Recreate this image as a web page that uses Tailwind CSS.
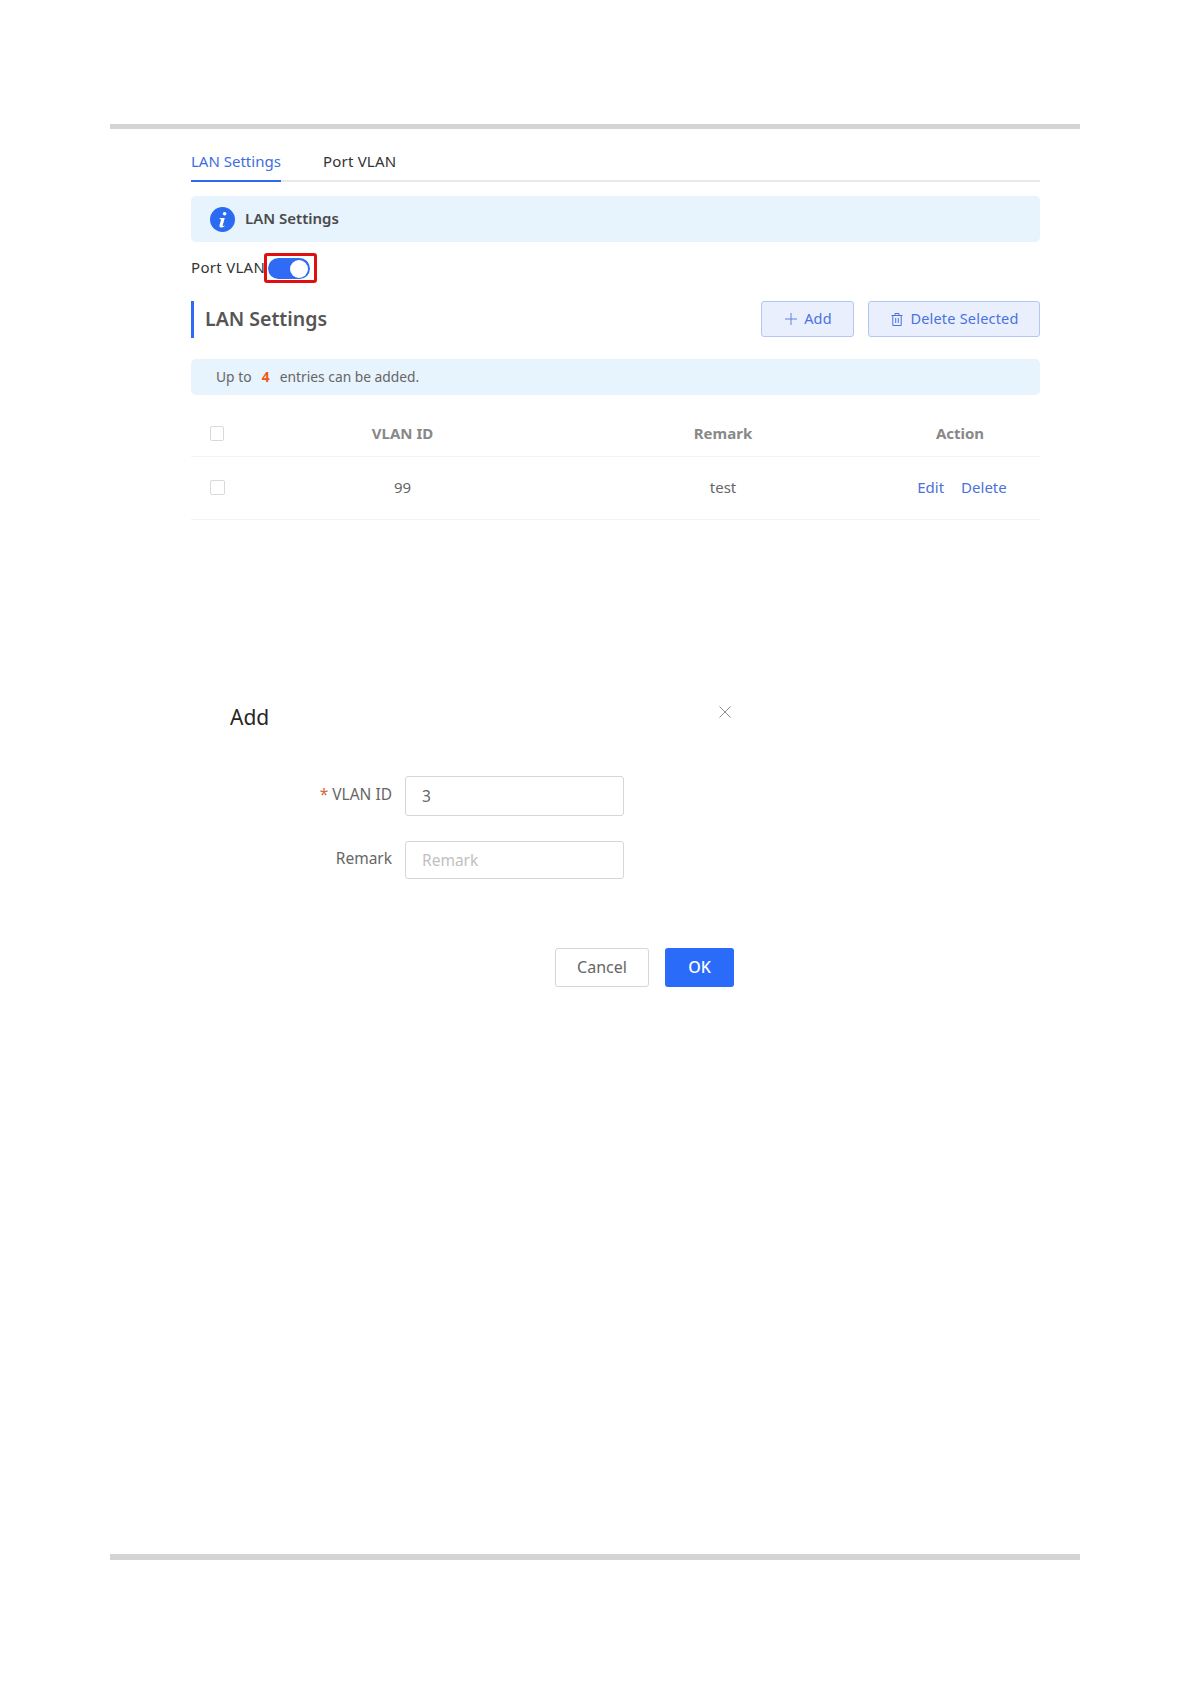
<!DOCTYPE html>
<html lang="en">
<head>
  <meta charset="UTF-8">
  <title>LAN Settings</title>
  <script src="https://cdn.jsdelivr.net/npm/@tailwindcss/browser@4"></script>
</head>
<body class="bg-white font-['Noto_Sans',sans-serif]">
  <div class="h-[1684px] w-[1191px] pt-[124px] pl-[110px] flex flex-col">
    <!-- Page rule -->
    <div class="h-[5px] w-[970px] bg-[#d4d4d4]"></div>

    <div class="w-[849px] ml-[81px]">
      <!-- Tabs -->
      <div class="mt-[21px] h-[32px] flex gap-[42px] border-b-2 border-[#e8e8e8] text-[15px] leading-[22px]">
        <div class="h-[32px] w-[90px] border-b-2 border-[#2f6bf0] text-[#3d6ee0] whitespace-nowrap">LAN Settings</div>
        <div class="text-[#333] whitespace-nowrap tracking-[0.2px]">Port VLAN</div>
      </div>

      <!-- Info banner -->
      <div class="mt-[14px] h-[46px] rounded-[5px] bg-[#e7f3fd] flex items-center pl-[19px] gap-[10px]">
        <svg width="25" height="25" viewBox="0 0 25 25" class="shrink-0">
          <circle cx="12.5" cy="12.5" r="12.5" fill="#2b6bf3"/>
          <circle cx="14.6" cy="6.8" r="1.8" fill="#fff"/>
          <path d="M9.8 11h5l-2.1 7.3q-.2.9.7.7l1.3-.6-.2.9q-2 1.400-3.800 1.200-1.700-.3-1.300-2l1.700-6.100-1.500-.3z" fill="#fff"/>
        </svg>
        <span class="text-[15px] font-semibold text-[#4a4a4a] pb-[2px]">LAN Settings</span>
      </div>

      <!-- Port VLAN switch -->
      <div class="mt-[11px] h-[30px] flex items-center text-[15px] tracking-[0.3px] text-[#333]">
        <span class="w-[73px] whitespace-nowrap pb-[2px]">Port VLAN</span>
        <div class="w-[53px] h-[30px] border-[3px] border-[#e01010] rounded-[3px] flex items-center pl-[1px] pt-[1px]">
          <div class="w-[42px] h-[21px] rounded-full bg-[#2f6bf5] flex items-center justify-end pr-[2px]">
            <div class="w-[18px] h-[18px] rounded-full bg-white"></div>
          </div>
        </div>
      </div>

      <!-- Section heading -->
      <div class="mt-[18px] flex items-start justify-between">
        <h2 class="h-[37px] border-l-[3px] border-[#2f6bf0] pl-[11px] text-[19.500px] leading-[36px] font-semibold text-[#555]">LAN Settings</h2>
        <div class="flex gap-[14px] text-[14.500px] tracking-[0.2px] text-[#4a72e0]">
          <button class="w-[93px] h-[36px] pl-[2px] rounded-[3px] border border-[#b4c6f2] bg-[#e9effc] flex items-center justify-center gap-[7px]">
            <svg width="12" height="12" viewBox="0 0 12 12" fill="none" stroke="#5f82e2" stroke-width="1"><path d="M6 0v12M0 6h12"/></svg>
            Add
          </button>
          <button class="w-[172px] h-[36px] pl-[2px] rounded-[3px] border border-[#b4c6f2] bg-[#e9effc] flex items-center justify-center gap-[7px]">
            <svg width="12" height="13" viewBox="0 0 12 13" fill="none" stroke="#4a72e0" stroke-width="1"><path d="M.5 2.500h11M4 2.500V.5h4v2M1.800 2.500v10h8.400v-10M4.700 5v5M7.300 5v5"/></svg>
            Delete Selected
          </button>
        </div>
      </div>

      <!-- Limit notice -->
      <div class="mt-[21px] h-[36px] rounded-[5px] bg-[#e7f3fd] flex items-center pl-[25px] text-[13.800px] text-[#666] whitespace-pre">Up to  <span class="font-bold text-[#ee5a14] px-[3px]">4</span>  entries can be added.</div>

      <!-- Table -->
      <table class="mt-[16px] w-full table-fixed border-collapse text-[15px]">
        <thead>
          <tr class="h-[45px] border-b border-[#f3f3f3] text-[#888]">
            <th class="w-[19px]"></th>
            <th class="w-[15px]"><div class="w-[14px] h-[15px] rounded-[2px] border border-[#d9d9d9]"></div></th>
            <th class="w-[355px] font-bold">VLAN ID</th>
            <th class="w-[286px] font-bold">Remark</th>
            <th class="font-bold pl-[14px]">Action</th>
          </tr>
        </thead>
        <tbody>
          <tr class="h-[63px] border-b border-[#f3f3f3] text-[#666]">
            <td></td>
            <td><div class="w-[15px] h-[15px] rounded-[2px] border border-[#d9d9d9]"></div></td>
            <td class="text-center">99</td>
            <td class="text-center">test</td>
            <td class="text-center pl-[18px] text-[#4a72d8]"><span class="mr-[17px]">Edit</span><span>Delete</span></td>
          </tr>
        </tbody>
      </table>
    </div>

    <!-- Add dialog -->
    <div class="ml-[120px] mt-[186px] w-[504px] relative">
      <button class="absolute right-[3px] top-0 w-[12px] h-[12px]" aria-label="Close">
        <svg width="12" height="12" viewBox="0 0 12 12" fill="none" stroke="#8c8c8c" stroke-width="1"><path d="M.5.5l11 11M11.500.5l-11 11"/></svg>
      </button>
      <h3 class="text-[21px] leading-[28px] text-[#262626] mt-[-3px]">Add</h3>

      <div class="mt-[45px] flex flex-col gap-[25px] text-[15.500px] text-[#666]">
        <div class="flex items-center gap-[13px]">
          <label class="w-[162px] text-right pb-[1px]"><span class="text-[#d0693a] mr-[4px]">*</span>VLAN ID</label>
          <input value="3" class="w-[219px] h-[40px] rounded-[3px] border border-[#d6d6d6] px-[16px] text-[#666]">
        </div>
        <div class="flex items-center gap-[13px]">
          <label class="w-[162px] text-right pb-[1px]">Remark</label>
          <input placeholder="Remark" class="w-[219px] h-[38px] rounded-[3px] border border-[#d6d6d6] px-[16px] placeholder:text-[#bfbfbf]">
        </div>
      </div>

      <div class="mt-[69px] flex justify-end gap-[16px] text-[16px]">
        <button class="w-[94px] h-[39px] rounded-[3px] border border-[#d6d6d6] text-[#666]">Cancel</button>
        <button class="w-[69px] h-[39px] rounded-[3px] bg-[#2b6bfa] text-white font-medium">OK</button>
      </div>
    </div>

    <!-- Page rule -->
    <div class="mt-auto mb-[124px] h-[6px] w-[970px] bg-[#d4d4d4]"></div>
  </div>
</body>
</html>
